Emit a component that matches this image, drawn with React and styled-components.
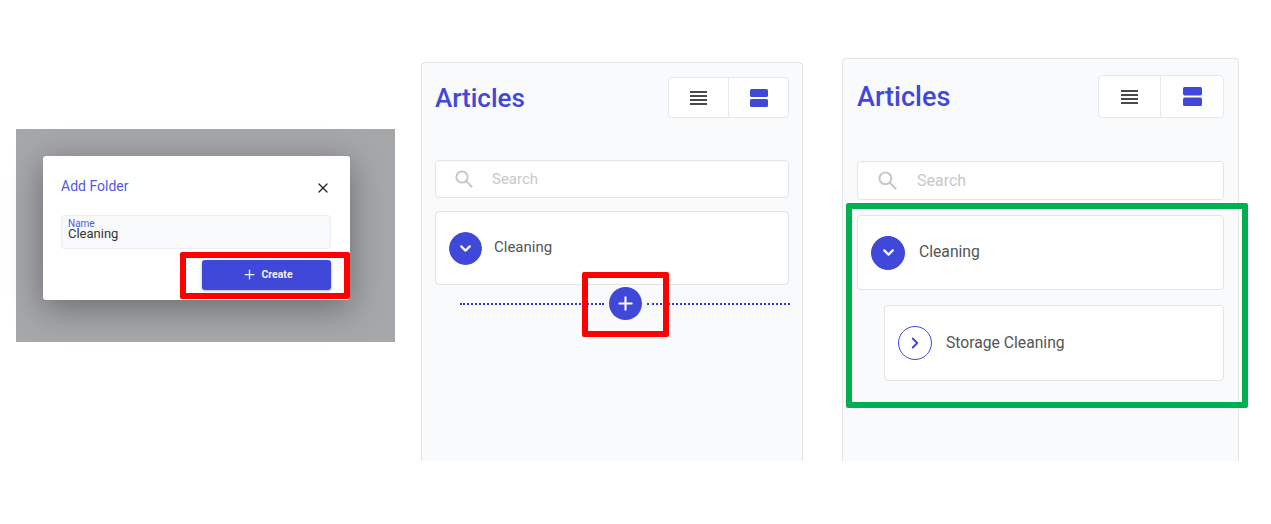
import styled, { createGlobalStyle } from "styled-components";
import { ChevronDown, ChevronRight, Plus, X } from "lucide-react";

const BLUE = "#3f48d8";

const GlobalStyle = createGlobalStyle`
    html, body {
        margin: 0;
        background: #fff;
    }
    body {
        font-family: Roboto, "Liberation Sans", sans-serif;
    }
    * {
        box-sizing: border-box;
    }
`;

const ListIcon = () => (
    <svg width="17" height="16" viewBox="0 0 17 16">
        <g fill="#4a4a4a">
            <rect x="0" y="1" width="17" height="2" />
            <rect x="0" y="5" width="17" height="2" />
            <rect x="0" y="9" width="17" height="2" />
            <rect x="0" y="13" width="17" height="2" />
        </g>
    </svg>
);

const CardsIcon = ({ size }) => (
    <svg width={size} height={size} viewBox="0 0 18 18">
        <g fill={BLUE}>
            <rect x="0" y="0" width="18" height="8" rx="1.5" />
            <rect x="0" y="10" width="18" height="8" rx="1.5" />
        </g>
    </svg>
);

const SearchIcon = ({ size }) => (
    <svg width={size} height={size} viewBox="0 0 18 18" fill="none" stroke="#c8c8c8" strokeWidth="2">
        <circle cx="7" cy="7" r="5.6" />
        <path d="M11 11l6.2 6.2" />
    </svg>
);

const FolderRow = ({ label, open, $height, $circle, $pad, $gap, $fontSize, $indent }) => (
    <Row $height={$height} $pad={$pad} $gap={$gap} $fontSize={$fontSize} $indent={$indent}>
        <Bullet $size={$circle} $open={open}>
            {open ? <ChevronDown size={17} strokeWidth={3} /> : <ChevronRight size={18} strokeWidth={2.5} />}
        </Bullet>
        <RowLabel>{label}</RowLabel>
    </Row>
);

const PanelHeader = ({ $titleSize, $toggleW, $toggleH, $divider, $icon }) => (
    <Header>
        <Title $size={$titleSize}>Articles</Title>
        <Toggle $width={$toggleW} $height={$toggleH}>
            <ToggleCell $width={$divider}><ListIcon /></ToggleCell>
            <ToggleCell><CardsIcon size={$icon} /></ToggleCell>
        </Toggle>
    </Header>
);

const App = () => {
    return (
        <Page>
            <GlobalStyle />
            <Scene>
                <Modal>
                    <ModalHead>
                        <ModalTitle>Add Folder</ModalTitle>
                        <CloseIcon><X size={16} strokeWidth={1.8} /></CloseIcon>
                    </ModalHead>
                    <Field>
                        <FieldLabel>Name</FieldLabel>
                        <FieldValue>Cleaning</FieldValue>
                    </Field>
                    <ModalFoot>
                        <CreateButton>
                            <Plus size={15} strokeWidth={2} />
                            Create
                        </CreateButton>
                        <RedFrame $left="119px" $top="-8px" $right="-19px" $bottom="-9px" />
                    </ModalFoot>
                </Modal>
            </Scene>

            <Panel $width="382px" $height="399px" $top="62px" $left="26px" $padLeft="13px" $padTop="14px" $padRight="13px">
                <PanelHeader $titleSize="26px" $toggleW="121px" $toggleH="41px" $divider="60px" $icon={18} />
                <SearchBox $height="38px" $top="42px" $fontSize="15px" $textGap="19px" $padLeft="19px">
                    <SearchIcon size={18} />
                    <span>Search</span>
                </SearchBox>
                <List $top="13px">
                    <FolderRow label="Cleaning" open $height="74px" $circle="33px" $pad="13px" $gap="12px" $fontSize="15px" />
                </List>
                <Divider>
                    <Dots />
                    <AddButton><Plus size={21} strokeWidth={2.4} /></AddButton>
                    <Dots />
                    <RedFrame $left="122px" $top="-15px" $right="121px" $bottom="-17px" />
                </Divider>
            </Panel>

            <Panel $width="397px" $height="403px" $top="58px" $left="39px" $padLeft="14px" $padTop="16px" $padRight="14px">
                <PanelHeader $titleSize="27px" $toggleW="126px" $toggleH="43px" $divider="62px" $icon={19} />
                <SearchBox $height="39px" $top="43px" $fontSize="16px" $textGap="20px" $padLeft="20px">
                    <SearchIcon size={19} />
                    <span>Search</span>
                </SearchBox>
                <List $top="15px" $gap="15px">
                    <FolderRow label="Cleaning" open $height="75px" $circle="34px" $pad="13px" $gap="14px" $fontSize="15.7px" />
                    <FolderRow label="Storage Cleaning" $height="76px" $circle="34px" $pad="13px" $gap="14px" $fontSize="15.7px" $indent="27px" />
                    <GreenFrame />
                </List>
            </Panel>
        </Page>
    );
};

export default App;

const Page = styled.main`
    display: flex;
    align-items: flex-start;
    width: 1271px;
    height: 524px;
    padding-left: 16px;
    overflow: hidden;
`;

const Scene = styled.section`
    flex: none;
    width: 379px;
    height: 213px;
    margin-top: 129px;
    padding: 27px 0 0 27px;
    background: #a6a7a9;
`;

const Modal = styled.div`
    display: flex;
    flex-direction: column;
    width: 307px;
    height: 144px;
    padding: 0 19px 0 18px;
    background: #fff;
    border-radius: 3px;
    box-shadow: 0 8px 34px rgba(0, 0, 0, 0.36);
`;

const ModalHead = styled.div`
    display: flex;
    align-items: center;
    justify-content: space-between;
    height: 59px;
    padding-top: 2px;
`;

const ModalTitle = styled.h2`
    margin: 0 0 2px;
    font-size: 14px;
    font-weight: 400;
    color: #5159e0;
`;

const CloseIcon = styled.span`
    display: flex;
    margin-top: 3px;
    color: #222;
`;

const Field = styled.div`
    display: flex;
    flex-direction: column;
    height: 34px;
    padding: 3px 6px 0;
    background: #f8f9fb;
    border: 1px solid #eceef1;
    border-radius: 3px;
`;

const FieldLabel = styled.span`
    font-size: 10px;
    line-height: 9px;
    color: #5159e0;
`;

const FieldValue = styled.span`
    font-size: 13px;
    line-height: 12px;
    color: #333;
`;

const ModalFoot = styled.div`
    position: relative;
    display: flex;
    justify-content: flex-end;
    margin-top: 11px;
`;

const CreateButton = styled.button`
    display: flex;
    align-items: center;
    justify-content: center;
    gap: 4px;
    width: 129px;
    height: 30px;
    padding: 0 0 1px 2px;
    border: none;
    border-radius: 3px;
    background: ${BLUE};
    color: #f2f3ff;
    font-family: inherit;
    font-size: 10.5px;
    font-weight: 700;
    box-shadow: 0 1px 3px rgba(0, 0, 0, 0.3);
`;

const RedFrame = styled.div`
    position: absolute;
    left: ${(p) => p.$left};
    top: ${(p) => p.$top};
    right: ${(p) => p.$right};
    bottom: ${(p) => p.$bottom};
    border: 6px solid #fe0000;
    border-radius: 2px;
    pointer-events: none;
`;

const GreenFrame = styled.div`
    position: absolute;
    left: -11px;
    top: -12px;
    right: -24px;
    bottom: -27px;
    border: 6px solid #00b050;
    border-radius: 2px;
    pointer-events: none;
`;

const Panel = styled.section`
    flex: none;
    width: ${(p) => p.$width};
    height: ${(p) => p.$height};
    margin-top: ${(p) => p.$top};
    margin-left: ${(p) => p.$left};
    padding: ${(p) => `${p.$padTop} ${p.$padRight} 0 ${p.$padLeft}`};
    background: #f9fafc;
    border: 1px solid #e3e4e7;
    border-bottom: none;
    border-radius: 4px 4px 0 0;
`;

const Header = styled.header`
    display: flex;
    align-items: center;
    justify-content: space-between;
`;

const Title = styled.h1`
    margin: 0;
    font-size: ${(p) => p.$size};
    font-weight: 500;
    color: ${BLUE};
`;

const Toggle = styled.div`
    display: flex;
    width: ${(p) => p.$width};
    height: ${(p) => p.$height};
    background: #fff;
    border: 1px solid #e6e7ea;
    border-radius: 4px;
`;

const ToggleCell = styled.div`
    display: flex;
    align-items: center;
    justify-content: center;
    flex: ${(p) => (p.$width ? `0 0 ${p.$width}` : "1")};
    ${(p) => p.$width && "border-right: 1px solid #e6e7ea;"}
`;

const SearchBox = styled.div`
    display: flex;
    align-items: center;
    gap: ${(p) => p.$textGap};
    height: ${(p) => p.$height};
    margin-top: ${(p) => p.$top};
    padding-left: ${(p) => p.$padLeft};
    background: #fff;
    border: 1px solid #e3e4e7;
    border-radius: 4px;
    font-size: ${(p) => p.$fontSize};
    color: #c8c8c8;
`;

const List = styled.div`
    position: relative;
    display: flex;
    flex-direction: column;
    gap: ${(p) => p.$gap || "14px"};
    margin-top: ${(p) => p.$top};
`;

const Row = styled.div`
    display: flex;
    align-items: center;
    gap: ${(p) => p.$gap};
    height: ${(p) => p.$height};
    margin-left: ${(p) => p.$indent || 0};
    padding-left: ${(p) => p.$pad};
    background: #fff;
    border: 1px solid #e3e4e7;
    border-radius: 4px;
    font-size: ${(p) => p.$fontSize};
    color: #555;
`;

const RowLabel = styled.span`
    margin-bottom: 2px;
`;

const Bullet = styled.span`
    display: flex;
    align-items: center;
    justify-content: center;
    flex: none;
    width: ${(p) => p.$size};
    height: ${(p) => p.$size};
    border-radius: 50%;
    border: 1px solid ${BLUE};
    background: ${(p) => (p.$open ? BLUE : "#fff")};
    color: ${(p) => (p.$open ? "#fff" : BLUE)};
`;

const Divider = styled.div`
    position: relative;
    display: flex;
    align-items: center;
    gap: 5px;
    height: 33px;
    margin: 2px -1px 0 25px;
`;

const Dots = styled.span`
    flex: 1;
    border-top: 2px dotted #3038d6;
`;

const AddButton = styled.span`
    display: flex;
    align-items: center;
    justify-content: center;
    flex: none;
    width: 33px;
    height: 33px;
    border-radius: 50%;
    background: ${BLUE};
    color: #fff;
`;
